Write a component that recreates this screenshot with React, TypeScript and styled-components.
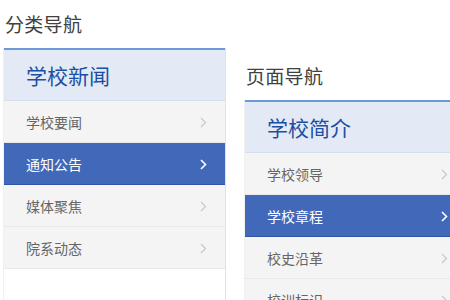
import React, {FC} from 'react';
import styled, {createGlobalStyle} from 'styled-components';

const GlobalStyle = createGlobalStyle`
    html, body {
        margin: 0;
        padding: 0;
        background: #fff;
        overflow: hidden;
    }
    body {
        font-family: "Noto Sans CJK SC", "Noto Sans", sans-serif;
    }
`;

const Page = styled.div`
    display: flex;
    align-items: flex-start;
    gap: 20px;
    padding-left: 4px;
    width: 480px;
`;

const Column = styled.div<{$offset: number}>`
    display: flex;
    flex-direction: column;
    margin-top: ${(p) => p.$offset}px;
    width: 221px;
    flex-shrink: 0;
`;

const SectionTitle = styled.h2`
    margin: 0;
    padding: 9px 0 0 1px;
    height: 48px;
    box-sizing: border-box;
    font-size: 19px;
    font-weight: normal;
    line-height: 30px;
    color: #404040;
    letter-spacing: 0.3px;
`;

const Panel = styled.div<{$extra: number}>`
    border-top: 2px solid #6b9ad6;
    background: #fff;
    box-shadow: 1px 0 0 #e2e2e2, -1px 0 0 #f0f0f0;
    padding-bottom: ${(p) => p.$extra}px;
`;

const PanelHeader = styled.div`
    height: 50px;
    display: flex;
    align-items: center;
    padding-left: 22px;
    background: #e4eaf5;
    border-bottom: 1px solid #d6deec;
    font-size: 21px;
    color: #1b4fa3;
`;

const NavList = styled.ul`
    list-style: none;
    margin: 0;
    padding: 0;
`;

const NavItem = styled.li<{$active?: boolean}>`
    height: 40px;
    display: flex;
    align-items: center;
    justify-content: space-between;
    padding: 0 18px 0 22px;
    font-size: 14px;
    color: ${(p) => (p.$active ? '#fff' : '#666')};
    background: ${(p) => (p.$active ? '#4168b9' : '#f4f4f4')};
    border-bottom: 1px solid ${(p) => (p.$active ? '#2f56a6' : '#e8e8e8')};
    border-top: 1px solid ${(p) => (p.$active ? '#4168b9' : '#f4f4f4')};
`;

const Chevron: FC<{active?: boolean}> = ({active}) => (
    <svg width='7' height='11' viewBox='0 0 7 11'>
        <path
            d='M1 1 L5.5 5.5 L1 10'
            fill='none'
            stroke={active ? '#fff' : '#c8c8c8'}
            strokeWidth={active ? 1.6 : 1.2}
        />
    </svg>
);

interface Section {
    title: string;
    header: string;
    items: string[];
    active: number;
    offset: number;
    extra: number;
}

const sections: Section[] = [
    {
        title: '分类导航',
        header: '学校新闻',
        items: ['学校要闻', '通知公告', '媒体聚焦', '院系动态'],
        active: 1,
        offset: 0,
        extra: 40,
    },
    {
        title: '页面导航',
        header: '学校简介',
        items: ['学校领导', '学校章程', '校史沿革', '校训标识'],
        active: 1,
        offset: 52,
        extra: 0,
    },
];

const App: FC = () => (
    <>
        <GlobalStyle/>
        <Page>
            {sections.map((s) => (
                <Column key={s.title} $offset={s.offset}>
                    <SectionTitle>{s.title}</SectionTitle>
                    <Panel $extra={s.extra}>
                        <PanelHeader>{s.header}</PanelHeader>
                        <NavList>
                            {s.items.map((item, i) => (
                                <NavItem key={item} $active={i === s.active}>
                                    <span>{item}</span>
                                    <Chevron active={i === s.active}/>
                                </NavItem>
                            ))}
                        </NavList>
                    </Panel>
                </Column>
            ))}
        </Page>
    </>
);

export default App;
